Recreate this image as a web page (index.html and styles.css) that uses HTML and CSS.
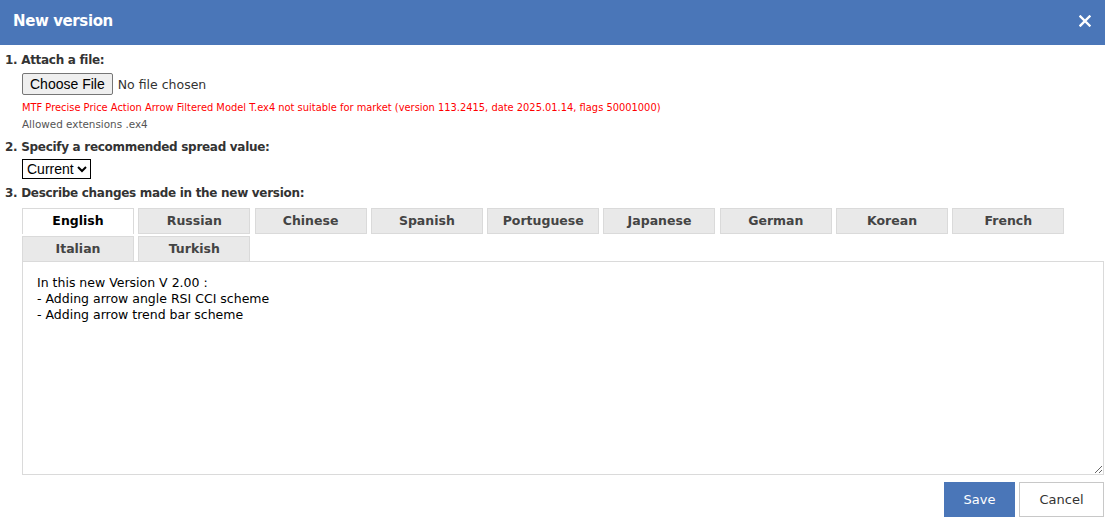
FILE: index.html
```html
<!DOCTYPE html>
<html lang="en">

<head>
    <meta charset="UTF-8">
    <title>New version</title>
    <link rel="stylesheet" href="styles.css">
</head>

<body>
    <div class="dialog">
        <div class="dialog-header">
            <span class="dialog-title">New version</span>
            <svg class="dialog-close" width="12" height="12" viewBox="0 0 12 12">
                <path d="M1.5 1.5 L10.5 10.5 M10.5 1.5 L1.5 10.5" stroke="#fff" stroke-width="2.4" stroke-linecap="square" fill="none" />
            </svg>
        </div>

        <div class="dialog-body">
            <div class="step">
                <div class="step-title">1. Attach a file:</div>
                <div class="step-content">
                    <div class="file-row">
                        <button class="file-btn" type="button">Choose File</button>
                        <span class="file-name">No file chosen</span>
                    </div>
                    <div class="file-error">MTF Precise Price Action Arrow Filtered Model T.ex4 not suitable for market (version 113.2415, date 2025.01.14, flags 50001000)</div>
                    <div class="file-hint">Allowed extensions .ex4</div>
                </div>
            </div>

            <div class="step">
                <div class="step-title">2. Specify a recommended spread value:</div>
                <div class="step-content">
                    <select class="spread-select">
                        <option>Current</option>
                    </select>
                </div>
            </div>

            <div class="step">
                <div class="step-title">3. Describe changes made in the new version:</div>
                <div class="step-content">
                    <div class="tabs">
                        <div class="tab active">English</div>
                        <div class="tab">Russian</div>
                        <div class="tab">Chinese</div>
                        <div class="tab">Spanish</div>
                        <div class="tab">Portuguese</div>
                        <div class="tab">Japanese</div>
                        <div class="tab">German</div>
                        <div class="tab">Korean</div>
                        <div class="tab">French</div>
                        <div class="tab">Italian</div>
                        <div class="tab">Turkish</div>
                    </div>
                    <textarea class="changes">In this new Version V 2.00 :
- Adding arrow angle RSI CCI scheme
- Adding arrow trend bar scheme</textarea>
                </div>
            </div>
        </div>

        <div class="dialog-footer">
            <button class="btn btn-save" type="button">Save</button>
            <button class="btn btn-cancel" type="button">Cancel</button>
        </div>
    </div>
</body>

</html>
```

FILE: styles.css
```css
body,
html {
    margin: 0;
    background-color: #fff;
    font-family: "DejaVu Sans", sans-serif;
    color: #333;
}

.dialog {
    width: 1105px;
}

.dialog-header {
    height: 45px;
    background-color: #4a76b8;
    color: #fff;
    display: flex;
    align-items: center;
    justify-content: space-between;
    padding: 0 14px 0 13px;
    box-sizing: border-box;
}

.dialog-title {
    font-size: 15px;
    font-weight: bold;
    letter-spacing: -0.4px;
    margin-top: -3px;
}

.dialog-close {
    display: block;
    margin-top: -3px;
}

.dialog-body {
    padding: 7px 1px 0 5px;
}

.step-title {
    font-size: 12px;
    font-weight: bold;
    letter-spacing: -0.3px;
    color: #333;
    line-height: 16px;
}

.step-content {
    padding-left: 17px;
}

.step {
    margin-bottom: 6px;
}

.step:last-child {
    margin-bottom: 0;
}

.file-row {
    display: flex;
    align-items: center;
    margin-top: 5px;
}

.file-btn {
    font-family: "Liberation Sans", Arial, sans-serif;
    font-size: 14px;
    height: 22px;
    padding: 0 7px;
    background-color: #efefef;
    border: 1px solid #767676;
    border-radius: 2px;
    color: #000;
}

.file-name {
    font-size: 12.5px;
    margin-left: 5px;
    color: #333;
}

.file-error {
    font-size: 9.9px;
    color: #f00;
    margin-top: 5px;
    line-height: 15px;
}

.file-hint {
    font-size: 10.4px;
    color: #555;
    line-height: 18px;
}

.spread-select {
    display: block;
    font-family: "Liberation Sans", Arial, sans-serif;
    font-size: 14px;
    height: 20px;
    margin-top: 4px;
    border: 1px solid #000;
    border-radius: 0;
    background-color: #fff;
    color: #000;
}

.tabs {
    display: flex;
    flex-wrap: wrap;
    column-gap: 4.3px;
    row-gap: 2px;
    margin-top: 7px;
}

.tab {
    width: 112px;
    height: 26px;
    box-sizing: border-box;
    background-color: #e9e9e9;
    border: 1px solid #dadada;
    font-size: 12.5px;
    font-weight: bold;
    color: #444;
    text-align: center;
    line-height: 24px;
}

.tab.active {
    background-color: #fff;
    border-bottom: none;
    color: #000;
}

.changes {
    display: block;
    width: 1082px;
    height: 214px;
    box-sizing: border-box;
    border: 1px solid #dadada;
    padding: 13px 14px;
    font-family: "DejaVu Sans", sans-serif;
    font-size: 12.5px;
    line-height: 16px;
    color: #000;
    resize: vertical;
    margin: -1px 0 0;
    outline: none;
}

.dialog-footer {
    display: flex;
    justify-content: flex-end;
    gap: 4px;
    padding: 7px 1px 0 0;
}

.btn {
    height: 35px;
    font-family: "DejaVu Sans", sans-serif;
    font-size: 13px;
    border-radius: 0;
    cursor: pointer;
}

.btn-save {
    width: 71px;
    background-color: #4a76b8;
    border: 1px solid #4a76b8;
    color: #fff;
}

.btn-cancel {
    width: 85px;
    background-color: #fff;
    border: 1px solid #c8c8c8;
    color: #333;
}
```
